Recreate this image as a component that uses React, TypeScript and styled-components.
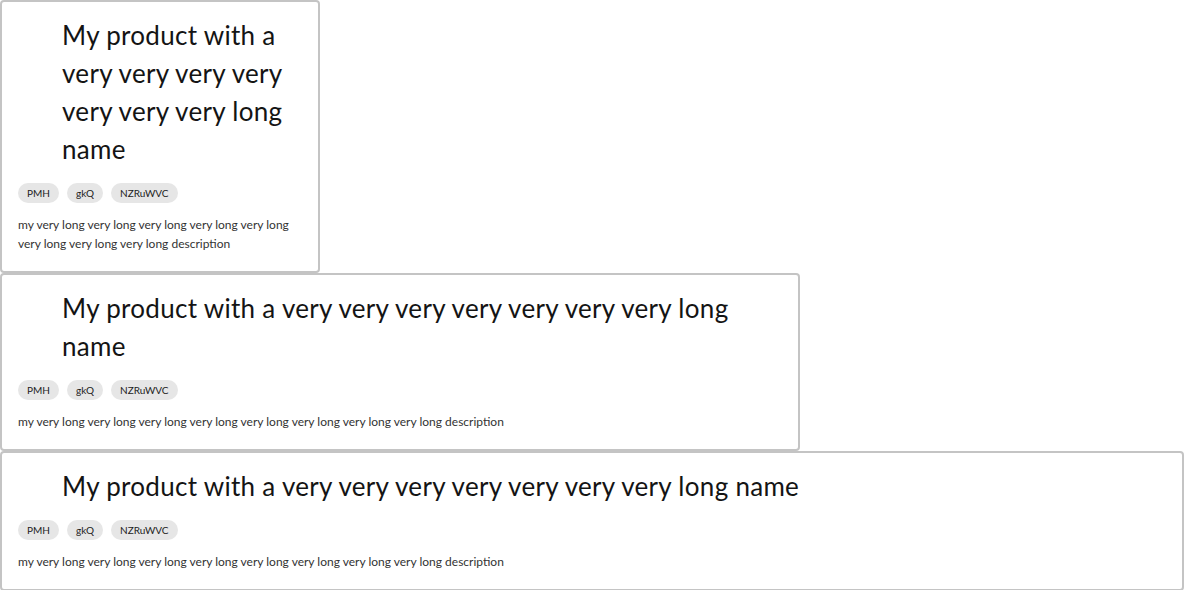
import React from "react";
import styled, { createGlobalStyle } from "styled-components";

const Global = createGlobalStyle`
  html, body { margin: 0; padding: 0; background: #fff; }
  body { font-family: Lato, "Open Sans", sans-serif; }
`;

const List = styled.div`
  display: flex;
  flex-direction: column;
  align-items: flex-start;
`;

const Card = styled.div<{ $width: string }>`
  box-sizing: border-box;
  width: ${(p) => p.$width};
  border: 2px solid #c4c4c4;
  border-radius: 4px;
  padding: 14px 16px 18px;
  display: flex;
  flex-direction: column;
  background: #fff;
`;

const Title = styled.h2`
  margin: 0 0 0 44px;
  font-size: 26px;
  letter-spacing: 0.3px;
  line-height: 38px;
  font-weight: 400;
  color: #141414;
`;

const Tags = styled.div`
  display: flex;
  gap: 8px;
  margin-top: 15px;
`;

const Tag = styled.span`
  display: inline-flex;
  align-items: center;
  height: 20px;
  padding: 0 9px;
  border-radius: 10px;
  background: #e6e6e6;
  font-size: 10px;
  color: #222;
`;

const Desc = styled.p`
  margin: 12px 0 0;
  font-size: 12px;
  line-height: 19px;
  color: #333;
`;

const widths = ["320px", "800px", "100%"];

export default function App() {
  return (
    <>
      <Global />
      <List>
        {widths.map((w) => (
          <Card key={w} $width={w}>
            <Title>My product with a very very very very very very very long name</Title>
            <Tags>
              <Tag>PMH</Tag>
              <Tag>gkQ</Tag>
              <Tag>NZRuWVC</Tag>
            </Tags>
            <Desc>
              my very long very long very long very long very long very long very long very long description
            </Desc>
          </Card>
        ))}
      </List>
    </>
  );
}
